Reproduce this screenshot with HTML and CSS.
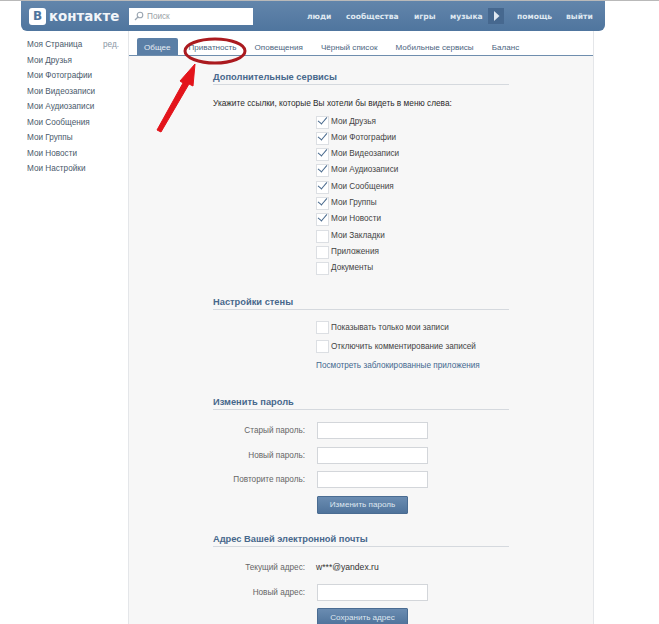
FILE: index.html
```html
<!DOCTYPE html>
<html lang="ru">
<head>
    <meta charset="UTF-8">
    <title>Настройки</title>
    <link rel="stylesheet" href="styles.css">
</head>
<body>
    <!-- Header -->
    <header class="head">
        <div class="logo"><span class="logo-box">В</span><span class="logo-text">контакте</span></div>
        <div class="search">
            <svg class="search-icon" width="10" height="10" viewBox="0 0 10 10"><circle cx="6" cy="4" r="2.8" fill="none" stroke="#9aa5b1" stroke-width="1.1"/><path d="M4 6 L1 9" stroke="#9aa5b1" stroke-width="1.3"/></svg>
            <span>Поиск</span>
        </div>
        <nav class="top-nav">
            <a class="nav-people">люди</a>
            <a class="nav-groups">сообщества</a>
            <a class="nav-games">игры</a>
            <a class="nav-music">музыка</a>
            <span class="play"><svg width="7" height="10" viewBox="0 0 7 10"><path d="M1 0 L6.5 5 L1 10 Z" fill="#dfe8f1"/></svg></span>
            <a class="nav-help">помощь</a>
            <a class="nav-exit">выйти</a>
        </nav>
    </header>

    <div class="layout">
        <!-- Left menu -->
        <aside class="side">
            <div class="side-row"><a>Моя Страница</a><span class="edit">ред.</span></div>
            <a class="side-row">Мои Друзья</a>
            <a class="side-row">Мои Фотографии</a>
            <a class="side-row">Мои Видеозаписи</a>
            <a class="side-row">Мои Аудиозаписи</a>
            <a class="side-row">Мои Сообщения</a>
            <a class="side-row">Мои Группы</a>
            <a class="side-row">Мои Новости</a>
            <a class="side-row">Мои Настройки</a>
        </aside>

        <main class="panel">
            <div class="tabs">
                <a class="tab tab-active">Общее</a>
                <a class="tab">Приватность</a>
                <a class="tab">Оповещения</a>
                <a class="tab">Чёрный список</a>
                <a class="tab">Мобильные сервисы</a>
                <a class="tab">Баланс</a>
            </div>

            <div class="settings">
                <section class="block block-services">
                    <h2>Дополнительные сервисы</h2>
                    <p class="hint">Укажите ссылки, которые Вы хотели бы видеть в меню слева:</p>
                    <div class="checks">
                        <label class="check on">Мои Друзья</label>
                        <label class="check on">Мои Фотографии</label>
                        <label class="check on">Мои Видеозаписи</label>
                        <label class="check on">Мои Аудиозаписи</label>
                        <label class="check on">Мои Сообщения</label>
                        <label class="check on">Мои Группы</label>
                        <label class="check on">Мои Новости</label>
                        <label class="check">Мои Закладки</label>
                        <label class="check">Приложения</label>
                        <label class="check">Документы</label>
                    </div>
                </section>

                <section class="block block-wall">
                    <h2>Настройки стены</h2>
                    <div class="checks checks-wide">
                        <label class="check">Показывать только мои записи</label>
                        <label class="check">Отключить комментирование записей</label>
                        <a class="link">Посмотреть заблокированные приложения</a>
                    </div>
                </section>

                <section class="block block-pass">
                    <h2>Изменить пароль</h2>
                    <div class="form">
                        <div class="row"><span class="label">Старый пароль:</span><span class="input"></span></div>
                        <div class="row"><span class="label">Новый пароль:</span><span class="input"></span></div>
                        <div class="row"><span class="label">Повторите пароль:</span><span class="input"></span></div>
                        <div class="row"><span class="label"></span><button class="btn">Изменить пароль</button></div>
                    </div>
                </section>

                <section class="block block-mail">
                    <h2>Адрес Вашей электронной почты</h2>
                    <div class="form">
                        <div class="row row-text"><span class="label">Текущий адрес:</span><span class="value">w***@yandex.ru</span></div>
                        <div class="row"><span class="label">Новый адрес:</span><span class="input"></span></div>
                        <div class="row"><span class="label"></span><button class="btn">Сохранить адрес</button></div>
                    </div>
                </section>
            </div>
        </main>
    </div>

    <!-- Red marker over the tab -->
    <svg class="marker" width="120" height="110" viewBox="0 0 120 110">
        <ellipse cx="66" cy="20" rx="30" ry="12" fill="none" stroke="#ab1a1f" stroke-width="3"/>
        <path d="M8 99 L34 52 L31 50 L46 33 L44 55 L40 53 L12 101 Z" fill="#e3141b" stroke="#e3141b" stroke-linejoin="round"/>
    </svg>
</body>
</html>
```

FILE: styles.css
```css
/* Reset */
* {
    margin: 0;
    padding: 0;
    box-sizing: border-box;
}

html {
    overflow: hidden;
}

body {
    height: 624px;
    overflow: hidden;
    position: relative;
    background: #fff;
    border-top: 1px solid #b9b9b9;
    font-family: 'Liberation Sans', sans-serif;
    font-size: 8.2px;
    color: #333;
}

a {
    color: inherit;
    text-decoration: none;
}

/* Header */
.head {
    width: 584px;
    height: 30px;
    margin-left: 21px;
    display: flex;
    align-items: center;
    background: linear-gradient(#6285ab, #4f759e);
    border-radius: 0 0 6px 6px;
    color: #fff;
}

.logo {
    width: 100px;
    display: flex;
    align-items: center;
    margin-left: 8px;
}

.logo-box {
    width: 17px;
    height: 17px;
    border-radius: 3px;
    background: #fff;
    color: #4f759e;
    font-family: 'DejaVu Sans', sans-serif;
    font-size: 12px;
    font-weight: 700;
    line-height: 17px;
    text-align: center;
    margin-right: 3px;
}

.logo-text {
    font-family: 'DejaVu Sans', sans-serif;
    font-size: 13.4px;
    font-weight: 700;
    color: #f2f5f9;
}

.search {
    width: 124px;
    height: 17px;
    display: flex;
    align-items: center;
    gap: 3px;
    padding-left: 5px;
    background: #fff;
    color: #9a9fa6;
}

.top-nav {
    display: flex;
    align-items: center;
    margin-left: 54px;
    height: 100%;
    font-family: 'DejaVu Sans', sans-serif;
    font-size: 7.6px;
    font-weight: 700;
    color: #dfe8f1;
}

.top-nav a {
    display: block;
}

.nav-people { width: 39px; }
.nav-groups { width: 68px; }
.nav-games { width: 36px; }
.nav-music { width: 38px; }
.nav-help { width: 49px; margin-left: 13px; }

.play {
    width: 16px;
    height: 16px;
    display: flex;
    align-items: center;
    justify-content: center;
    background: #46688f;
}

/* Layout */
.layout {
    display: flex;
    margin-left: 21px;
}

.side {
    width: 107px;
    padding: 6px 0 0 6px;
}

.side-row {
    display: flex;
    justify-content: space-between;
    height: 15.5px;
    line-height: 15.5px;
    padding-right: 9px;
    color: #4a5a6b;
}

.edit {
    color: #8a97a5;
}

.panel {
    width: 466px;
    height: 600px;
    border-left: 1px solid #e4e6e9;
    border-right: 1px solid #e4e6e9;
}

/* Tabs */
.tabs {
    height: 25px;
    display: flex;
    align-items: flex-end;
    padding-left: 8px;
    border-bottom: 1px solid #6f8eae;
    background: #fff;
    font-size: 8.1px;
}

.tab {
    height: 17px;
    line-height: 19px;
    padding: 0 7px;
    margin-right: 4px;
    color: #4c6580;
}

.tab-active {
    background: #5b7fa6;
    color: #e8eef5;
    border-radius: 2px 2px 0 0;
}

/* Settings */
.settings {
    height: 100%;
    padding-left: 84px;
    background: #f7f7f7;
}

.block {
    width: 296px;
}

.block h2 {
    height: 17px;
    line-height: 19px;
    border-bottom: 1px solid #d5d9de;
    font-size: 9.3px;
    font-weight: 700;
    color: #47688c;
}

.block-services { padding-top: 12px; }
.block-wall { padding-top: 17px; }
.block-pass { padding-top: 19px; }
.block-mail { padding-top: 8.5px; }

.hint {
    margin-top: 12px;
    line-height: 12px;
    font-size: 8.3px;
    color: #2b2b2b;
}

.checks {
    display: flex;
    flex-direction: column;
    margin-top: 4.5px;
    padding-left: 103px;
}

.check {
    position: relative;
    height: 16.3px;
    line-height: 16.3px;
    padding-left: 15px;
    color: #444;
    white-space: nowrap;
}

/* Box of the checkbox */
.check::before {
    content: "";
    position: absolute;
    left: 0;
    top: 2px;
    width: 11px;
    height: 11px;
    border: 1px solid #dcdfe3;
    background: #fff;
}

.check.on::after {
    content: "";
    position: absolute;
    left: 4px;
    top: 1px;
    width: 4px;
    height: 8px;
    border-right: 1.6px solid #47688c;
    border-bottom: 1.6px solid #47688c;
    transform: rotate(40deg);
}

.checks-wide {
    margin-top: 8px;
}

.checks-wide .check {
    height: 19px;
    line-height: 19px;
}

.checks-wide .check::before {
    top: 3px;
}

.link {
    margin-top: 2px;
    line-height: 16px;
    color: #44698f;
    white-space: nowrap;
}

/* Forms */
.form {
    padding-top: 12px;
}

.row {
    display: flex;
    align-items: center;
    margin-bottom: 7.5px;
}

.row-text {
    height: 17px;
    margin-bottom: 8px;
}

.label {
    width: 92px;
    margin-right: 12px;
    text-align: right;
    color: #666;
    white-space: nowrap;
}

.input {
    width: 111px;
    height: 17px;
    background: #fff;
    border: 1px solid #d3d6da;
}

.value {
    margin-left: -1px;
    font-size: 8.6px;
    color: #333;
}

.btn {
    width: 91px;
    height: 18px;
    border: 1px solid #4a6c92;
    border-radius: 1px;
    background: linear-gradient(#6a8cb1, #4f739b);
    color: #dfe7f0;
    font-family: inherit;
    font-size: 8.1px;
}

/* Red marker */
.marker {
    position: absolute;
    left: 149px;
    top: 30px;
}
```
